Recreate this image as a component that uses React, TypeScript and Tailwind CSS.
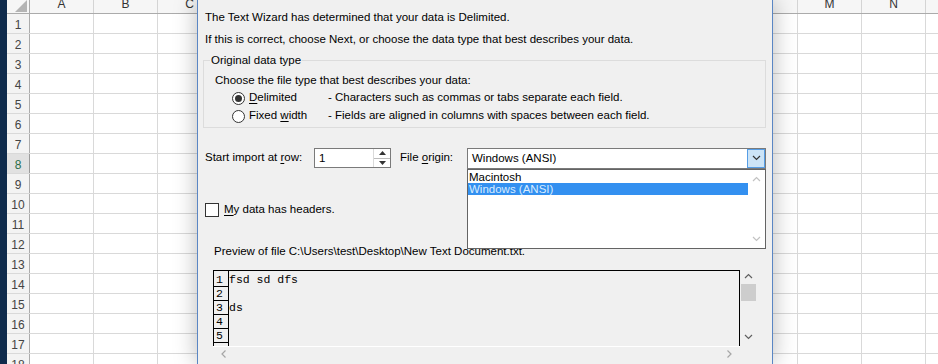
import { ReactNode } from "react";

const cols = ["A", "B", "C", "D", "E", "F", "G", "H", "I", "J", "K", "L", "M", "N", "O"];
const rows = Array.from({ length: 18 }, (_, i) => i + 1);

const U = ({ children }: { children: ReactNode }) => <span className="underline underline-offset-2">{children}</span>;

const Chevron = ({ up, className }: { up?: boolean; className?: string }) => (
  <svg width="9" height="6" viewBox="0 0 9 6" className={className}>
    <path d={up ? "M1 5 L4.5 1.5 L8 5" : "M1 1 L4.5 4.5 L8 1"} fill="none" stroke="currentColor" strokeWidth="1.2" />
  </svg>
);

const Sheet = () => (
  <div className="flex h-full w-full overflow-hidden">
    {/* desktop sliver */}
    <div className="w-[7px] shrink-0 bg-[#0f2b4c]" />
    <div className="flex flex-col">
      {/* column headers */}
      <div className="flex h-[14px] shrink-0 overflow-hidden border-b border-[#ababab] bg-[#f6f6f6]">
        <div className="relative w-[23px] shrink-0 border-r border-[#ababab]">
          <svg width="12" height="12" viewBox="0 0 12 12" className="absolute right-[2px] bottom-[1px]">
            <path d="M12 0 L12 12 L0 12 Z" fill="#b4b4b4" />
          </svg>
        </div>
        {cols.map((c) => (
          <div
            key={c}
            className="-mt-[3px] w-[64px] shrink-0 border-r border-[#d4d4d4] text-center text-[12px] leading-[14px] text-[#333]">
            {c}
          </div>
        ))}
      </div>
      {/* rows */}
      {rows.map((r) => (
        <div key={r} className="flex h-[20px] shrink-0 border-b border-[#d9d9d9]">
          <div
            className={
              r === 8
                ? "w-[23px] shrink-0 border-r border-[#9a9a9a] bg-[#e1e1e1] pt-[2px] text-center text-[12px] leading-[18px] text-[#2a6e48]"
                : "w-[23px] shrink-0 border-r border-[#ababab] bg-[#f3f3f3] pt-[2px] text-center text-[12px] leading-[18px] text-[#444]"
            }>
            {r}
          </div>
          {cols.map((c) => (
            <div key={c} className="w-[64px] shrink-0 border-r border-[#d9d9d9] bg-white" />
          ))}
        </div>
      ))}
    </div>
  </div>
);

const Radio = ({ checked }: { checked?: boolean }) => (
  <span className="flex h-[13px] w-[13px] items-center justify-center rounded-full border border-[#333] bg-white">
    {checked && <span className="h-[7px] w-[7px] rounded-full bg-[#333]" />}
  </span>
);

const Dialog = () => (
  <div className="absolute top-0 bottom-0 left-[197px] w-[576px] border-x border-[#5a86c4] bg-[#f0f0f0] text-[11.5px] text-[#000] shadow-[0_0_22px_rgba(0,0,0,0.28)]">
    <div className="pt-[6px] pl-[7px]">
      <div className="h-[22px] leading-[22px]">The Text Wizard has determined that your data is Delimited.</div>
      <div className="h-[22px] leading-[22px]">
        If this is correct, choose Next, or choose the data type that best describes your data.
      </div>
    </div>

    {/* group box */}
    <div className="relative mt-[10px] ml-[5px] h-[68px] w-[563px] border border-[#dcdcdc]">
      <span className="absolute -top-[9px] left-[6px] bg-[#f0f0f0] px-[1px] leading-[16px]">Original data type</span>
      <div className="pt-[11px] pl-[11px] leading-[16px]">Choose the file type that best describes your data:</div>
      <div className="mt-[1px] flex h-[18px] items-center pl-[28px]">
        <Radio checked />
        <span className="ml-[4px] w-[79px]">
          <U>D</U>elimited
        </span>
        <span>- Characters such as commas or tabs separate each field.</span>
      </div>
      <div className="flex h-[18px] items-center pl-[28px]">
        <Radio />
        <span className="ml-[4px] w-[79px]">
          Fixed <U>w</U>idth
        </span>
        <span>- Fields are aligned in columns with spaces between each field.</span>
      </div>
    </div>

    {/* import row / origin */}
    <div className="mt-[20px] flex h-[20px] items-center pl-[7px]">
      <span className="w-[109px]">
        Start import at <U>r</U>ow:
      </span>
      <div className="flex h-[20px] w-[77px] border border-[#7a7a7a] bg-white">
        <span className="flex-1 pl-[4px] leading-[18px]">1</span>
        <div className="flex w-[17px] flex-col border-l border-[#dadada]">
          <div className="flex flex-1 items-center justify-center border-b border-[#bcbcbc]">
            <svg width="7" height="4" viewBox="0 0 7 4">
              <path d="M0 4 L3.5 0 L7 4 Z" fill="#333" />
            </svg>
          </div>
          <div className="flex flex-1 items-center justify-center">
            <svg width="7" height="4" viewBox="0 0 7 4">
              <path d="M0 0 L3.5 4 L7 0 Z" fill="#333" />
            </svg>
          </div>
        </div>
      </div>
      <span className="ml-[9px] w-[67px]">
        File <U>o</U>rigin:
      </span>
      <div className="relative flex h-[21px] w-[299px] border border-[#7a7a7a] bg-white">
        <span className="flex-1 pl-[4px] leading-[19px]">Windows (ANSI)</span>
        <div className="flex w-[18px] items-center justify-center border border-[#569de5] bg-[#cce4f7] text-[#333]">
          <Chevron />
        </div>
        {/* open list */}
        <div className="absolute top-[20px] -left-[1px] z-10 flex h-[80px] w-[299px] border border-[#646464] bg-white">
          <div className="flex-1 pt-[1px]">
            <div className="h-[12px] pl-[1px] leading-[12px]">Macintosh</div>
            <div className="h-[12px] bg-[#3390f0] pl-[1px] leading-[12px] text-[#d8ecff]">Windows (ANSI)</div>
          </div>
          <div className="flex w-[17px] flex-col items-center justify-between py-[6px] text-[#c2c2c2]">
            <Chevron up />
            <Chevron />
          </div>
        </div>
      </div>
    </div>

    {/* headers checkbox */}
    <div className="mt-[35px] flex h-[14px] items-center pl-[7px]">
      <span className="h-[14px] w-[14px] border border-[#333] bg-white" />
      <span className="ml-[5px]">
        <U>M</U>y data has headers.
      </span>
    </div>

    {/* preview */}
    <div className="mt-[26px] h-[16px] pl-[16px] leading-[16px]">
      Preview of file C:\Users\test\Desktop\New Text Document.txt.
    </div>
    <div className="mt-[11px] ml-[15px] flex">
      <div className="flex w-[527px] flex-col">
        <div className="flex h-[76px] border-x border-t border-black font-['Liberation_Mono',monospace] text-[11.5px]">
          <div className="flex w-[15px] flex-col border-r border-black pt-[2px]">
            {[1, 2, 3, 4, 5].map((n) => (
              <div key={n} className="h-[14px] border-b border-black pl-[2px] leading-[13px]">
                {n}
              </div>
            ))}
          </div>
          <div className="flex flex-col pt-[2px]">
            <div className="h-[14px] leading-[14px]">fsd sd dfs</div>
            <div className="h-[14px]" />
            <div className="h-[14px] leading-[14px]">ds</div>
          </div>
        </div>
        <div className="flex h-[14px] items-center justify-between border-t border-white px-[6px] text-[#a6a6a6]">
          <Chevron className="rotate-90" />
          <Chevron className="-rotate-90" />
        </div>
      </div>
      <div className="flex h-[76px] w-[17px] flex-col items-center pt-[3px] text-[#606060]">
        <Chevron up />
        <div className="mt-[5px] h-[17px] w-[15px] bg-[#cdcdcd]" />
        <div className="mt-auto mb-[6px]">
          <Chevron />
        </div>
      </div>
    </div>
  </div>
);

export default function App() {
  return (
    <div className="relative h-[364px] w-[938px] overflow-hidden bg-white font-['Liberation_Sans',Arial,sans-serif]">
      <Sheet />
      <Dialog />
    </div>
  );
}
